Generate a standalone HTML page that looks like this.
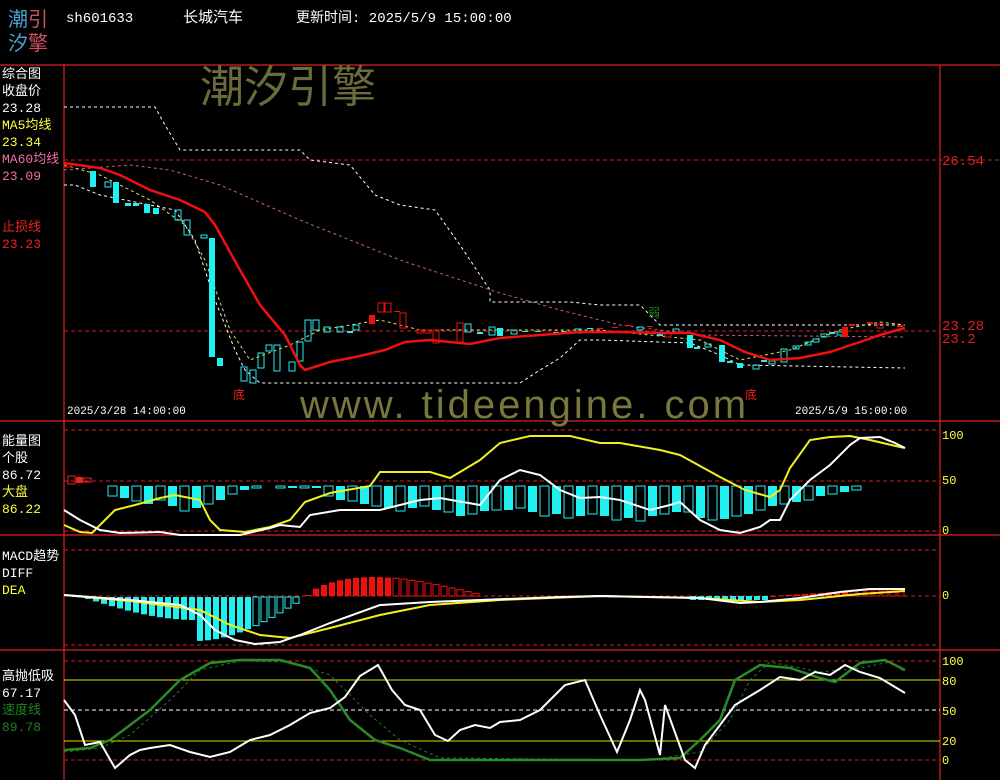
<!DOCTYPE html><html><head><meta charset="utf-8"><style>
body{margin:0;background:#000;width:1000px;height:780px;overflow:hidden;position:relative;font-family:"Liberation Mono","Noto Sans CJK SC",monospace}
.t{position:absolute;font-size:13px;line-height:17px;white-space:nowrap}
</style></head><body>
<svg width="1000" height="780" style="position:absolute;left:0;top:0" xmlns="http://www.w3.org/2000/svg">
<g stroke="#e02020" stroke-width="1.2" fill="none">
<line x1="0" y1="65" x2="1000" y2="65"/><line x1="0" y1="421" x2="1000" y2="421"/><line x1="0" y1="535" x2="1000" y2="535"/><line x1="0" y1="650" x2="1000" y2="650"/>
<line x1="64" y1="65" x2="64" y2="780"/><line x1="940" y1="65" x2="940" y2="780"/>
</g>
<g stroke="#d02020" stroke-width="1" stroke-dasharray="4,3" fill="none">
<line x1="64" y1="160" x2="1000" y2="160"/><line x1="64" y1="331" x2="940" y2="331"/>
<line x1="64" y1="430" x2="940" y2="430"/><line x1="64" y1="481" x2="940" y2="481"/><line x1="64" y1="531" x2="940" y2="531"/>
<line x1="64" y1="550" x2="940" y2="550"/><line x1="64" y1="596" x2="940" y2="596"/><line x1="64" y1="645" x2="940" y2="645"/>
<line x1="64" y1="661" x2="940" y2="661"/><line x1="64" y1="760" x2="940" y2="760"/>
</g>
<line x1="64" y1="680" x2="940" y2="680" stroke="#e0e000"/><line x1="64" y1="741" x2="940" y2="741" stroke="#e0e000"/>
<line x1="64" y1="710" x2="940" y2="710" stroke="#fff" stroke-dasharray="4,3"/>
<text x="200" y="102" font-size="44" fill="#6a6a3c" font-family="Noto Sans CJK SC,sans-serif">潮汐引擎</text>
<text x="300" y="418" font-size="40" fill="#77773f" font-family="Liberation Sans,sans-serif" letter-spacing="3">www. tideengine. com</text>
<g fill="none" stroke-dasharray="3,3">
<polyline stroke="#fff" points="64,107 155,107 165,125 180,150 300,150 310,160 350,165 375,195 400,205 435,210 460,245 490,290 490,302 570,302 600,305 640,305 660,325 905,325"/>
<polyline stroke="#fff" points="64,185 75,185 100,195 175,210 195,240 215,300 235,350 245,370 260,383 520,383 540,370 560,358 580,340 600,340 690,343 720,355 740,365 905,368"/>
<polyline stroke="#c06080" points="64,170 130,165 170,170 220,185 300,220 400,260 500,293 560,310 620,325 700,335 905,337"/>
<polyline stroke="#e0e060" points="64,165 100,175 150,200 185,225 205,260 230,330 250,360 290,345 320,330 380,320 420,330 500,330 600,330 700,340 740,360 790,350 840,330 880,322 905,325"/>
</g>
<g id="cand"></g>
<polyline fill="none" stroke="#f01010" stroke-width="2.5" points="64,163 100,168 120,175 150,190 180,200 205,212 215,225 240,270 260,305 285,335 300,365 305,370 330,362 360,356 385,350 405,342 430,340 470,344 500,338 540,335 580,332 620,332 660,333 690,333 720,340 745,352 770,360 800,358 830,352 860,342 880,335 905,328"/>
<g id="eb"></g>
<polyline fill="none" stroke="#f0f020" stroke-width="2" points="64,525 80,532 92,533 105,520 115,510 135,505 160,498 175,495 190,498 200,500 210,520 220,530 245,532 270,527 290,520 305,502 330,493 370,486 380,472 430,472 450,478 480,460 500,443 530,436 570,436 600,443 620,443 660,450 680,455 720,477 745,490 770,497 780,490 790,468 810,440 830,437 850,436 870,440 900,447 905,448"/>
<polyline fill="none" stroke="#fff" stroke-width="2" points="64,510 80,520 100,530 120,533 160,532 180,535 240,535 270,528 280,525 300,527 310,515 340,510 380,510 420,500 440,498 480,505 500,480 520,470 540,475 560,490 580,498 600,497 620,500 650,510 670,505 680,502 700,520 720,530 740,533 760,527 770,520 780,520 790,500 810,480 830,465 850,445 860,438 880,437 895,443 905,448"/>
<g id="mb"></g>
<polyline fill="none" stroke="#f0f020" stroke-width="2" points="64,595 130,601 200,610 230,625 260,635 290,638 330,628 380,615 430,605 500,600 600,596 700,598 760,602 800,600 860,594 905,591"/>
<polyline fill="none" stroke="#fff" stroke-width="2" points="64,595 130,600 180,605 200,615 215,630 235,640 255,644 280,642 300,635 330,623 380,605 430,602 480,600 560,597 600,596 700,598 740,603 760,602 800,598 840,592 870,589 905,589"/>
<polyline fill="none" stroke="#208020" stroke-width="1" stroke-dasharray="3,3" points="64,752 100,748 130,735 170,700 200,670 240,661 290,662 330,675 370,715 400,740 440,758 650,760 700,752 730,720 750,680 770,662 820,672 860,668 890,662 905,672"/>
<polyline fill="none" stroke="#2a8a2a" stroke-width="2.5" points="64,750 90,748 110,740 150,710 180,680 210,663 240,660 280,660 310,668 330,690 350,720 375,740 400,748 430,760 640,760 680,758 700,740 720,720 735,680 760,665 790,668 820,678 835,682 860,663 885,660 905,670"/>
<polyline fill="none" stroke="#fff" stroke-width="2" points="64,700 75,715 85,745 100,742 115,768 130,755 140,750 150,748 170,745 190,752 210,757 230,752 250,740 270,735 290,725 310,713 330,708 345,697 360,676 378,665 392,690 405,705 420,710 435,735 448,741 460,730 475,725 490,728 500,722 520,720 540,710 565,685 585,680 600,715 617,752 630,720 640,690 645,700 660,755 665,705 685,760 695,768 705,745 735,705 760,690 780,677 800,680 815,672 830,675 845,665 860,672 880,678 905,693"/>
</svg>
<script>
var ns="http://www.w3.org/2000/svg";
function R(g,x,y,w,h,c,f){var r=document.createElementNS(ns,"rect");r.setAttribute("x",x);r.setAttribute("y",Math.min(y,y+h));r.setAttribute("width",w);r.setAttribute("height",Math.max(1,Math.abs(h)));r.setAttribute(f?"fill":"stroke",c);r.setAttribute("fill",f?c:"none");document.getElementById(g).appendChild(r);}
// candles [x,top,bottom,type] 0 cyan hollow,1 cyan filled,2 red filled,3 red hollow
var cd=[[68,163,167,3],[93,171,187,1],[108,182,187,0],[116,182,203,1],[128,203,206,1],[136,203,206,1],[147,204,213,1],[156,208,214,1],[178,210,220,0],[187,220,235,0],[204,235,238,0],[212,238,357,1],[220,358,366,1],[244,367,381,0],[253,370,383,0],[261,353,368,0],[269,345,351,0],[277,345,371,0],[292,362,371,0],[300,342,361,0],[308,320,341,0],[316,320,330,0],[327,327,332,0],[340,327,332,0],[350,331,333,1],[356,325,330,0],[372,315,324,2],[381,303,312,3],[388,303,312,3],[397,311,312,2],[403,313,328,3],[420,330,333,3],[428,330,333,3],[436,330,343,3],[460,323,342,3],[468,324,332,0],[480,332,334,1],[492,327,335,0],[500,328,336,1],[514,330,334,0],[525,331,332,1],[538,331,332,1],[556,332,333,1],[564,331,332,1],[578,329,333,0],[590,328,329,1],[600,328,329,2],[615,327,328,2],[628,325,326,2],[640,327,330,0],[650,326,327,2],[660,334,336,1],[668,333,337,3],[676,329,333,0],[690,335,348,1],[697,347,349,1],[708,344,347,0],[722,345,362,1],[730,361,363,1],[740,363,368,1],[756,365,369,0],[764,360,362,1],[772,361,364,0],[784,349,362,0],[796,346,349,0],[808,342,345,0],[816,339,342,0],[824,334,337,0],[832,332,334,1],[840,332,335,0],[845,327,337,2],[852,324,326,2],[870,322,324,2],[880,324,328,3],[900,325,327,2]];
cd.forEach(function(c){var col=c[3]>=2?"#f01010":"#20f0f0";R("cand",c[0]-3,c[1],6,c[2]-c[1],col,c[3]==1||c[3]==2);});
// energy bars
for(var x=108;x<860;x+=12){if(x>258&&x<270)continue;var h=[10,12,15,18,14,20,25,22,18,14,8,4,2,2,2,2,2,2,10,14,15,18,20,22,25,22,20,24,26,30,28,25,24,24,22,26,30,28,32,30,28,30,34,32,35,30,28,26,26,32,34,33,30,28,24,20,18,16,14,10,8,6,4,3,2][Math.floor((x-108)/12)%65]||4;R("eb",x,486,9,h,"#20f0f0",x%24<12);}
[68,76,84].forEach(function(x,i){R("eb",x,476+i,7,8-i*2,"#f02020",i==1);});
// macd bars
for(var x=85;x<300;x+=8){var t=(x-85)/215;var h=Math.sin(t*Math.PI)*35*(t>0.5?1.2:0.6)+2;R("mb",x,597,6,h,"#20f0f0",x<250);}
for(var x=305;x<480;x+=8){var t=(x-305)/175;var h=-Math.sin(Math.pow(t,0.7)*Math.PI)*18-1;R("mb",x,596,6,h,"#f01010",x<390);}
for(var x=690;x<905;x+=8){var h=x<770?4:-(Math.min(6,(x-770)/15));R("mb",x,596,6,h,x<770?"#20f0f0":"#f01010",x<850);}
</script>
<div class="t" style="left:8px;top:6px;font-size:20px;line-height:24px;font-family:'Noto Sans CJK SC',sans-serif"><span style="color:#4aa0d0">潮</span><span style="color:#d05060">引</span><br><span style="color:#4aa0d0">汐</span><span style="color:#d05060">擎</span></div>
<div class="t" style="left:66px;top:11px;color:#fff;font-size:14px">sh601633</div>
<div class="t" style="left:183px;top:10px;color:#fff;font-size:15px">长城汽车</div>
<div class="t" style="left:296px;top:11px;color:#fff;font-size:14px">更新时间: 2025/5/9 15:00:00</div>
<div class="t" style="left:2px;top:66px;color:#fff">综合图<br>收盘价<br>23.28</div>
<div class="t" style="left:2px;top:117px;color:#ffff40">MA5均线<br>23.34</div>
<div class="t" style="left:2px;top:151px;color:#f070a0">MA60均线<br>23.09</div>
<div class="t" style="left:2px;top:219px;color:#f02020">止损线<br>23.23</div>
<div class="t" style="left:942px;top:154px;color:#e02020;font-size:14px">26.54</div>
<div class="t" style="left:942px;top:321px;color:#e02020;font-size:14px;line-height:13px">23.28<br>23.2</div>
<div class="t" style="left:648px;top:306px;color:#208020;font-size:12px">弱</div>
<div class="t" style="left:233px;top:388px;color:#f02020;font-size:12px">底</div>
<div class="t" style="left:745px;top:388px;color:#f02020;font-size:12px">底</div>
<div class="t" style="left:67px;top:404px;color:#fff;font-size:11px">2025/3/28 14:00:00</div>
<div class="t" style="left:795px;top:404px;color:#fff;font-size:11px">2025/5/9 15:00:00</div>
<div class="t" style="left:2px;top:433px;color:#fff">能量图<br>个股<br>86.72</div>
<div class="t" style="left:2px;top:484px;color:#ffff40">大盘<br>86.22</div>
<div class="t" style="left:942px;top:428px;color:#ffff40;font-size:12px">100</div>
<div class="t" style="left:942px;top:473px;color:#ffff40;font-size:12px">50</div>
<div class="t" style="left:942px;top:523px;color:#ffff40;font-size:12px">0</div>
<div class="t" style="left:2px;top:548px;color:#fff">MACD趋势<br>DIFF</div>
<div class="t" style="left:2px;top:582px;color:#ffff40">DEA</div>
<div class="t" style="left:942px;top:588px;color:#ffff40;font-size:12px">0</div>
<div class="t" style="left:2px;top:668px;color:#fff">高抛低吸<br>67.17</div>
<div class="t" style="left:2px;top:702px;color:#208020">速度线<br>89.78</div>
<div class="t" style="left:942px;top:654px;color:#ffff40;font-size:12px">100</div>
<div class="t" style="left:942px;top:674px;color:#ffff40;font-size:12px">80</div>
<div class="t" style="left:942px;top:704px;color:#ffff40;font-size:12px">50</div>
<div class="t" style="left:942px;top:734px;color:#ffff40;font-size:12px">20</div>
<div class="t" style="left:942px;top:753px;color:#ffff40;font-size:12px">0</div>
</body></html>
